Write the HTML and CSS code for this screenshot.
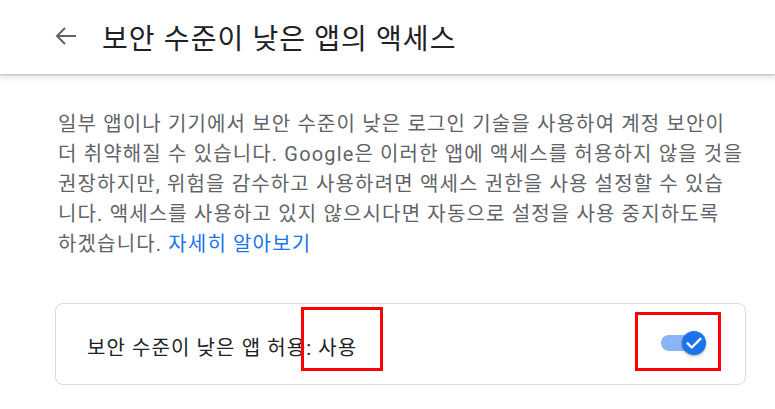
FILE: index.html
```html
<!DOCTYPE html>
<html lang="ko">
<head>
<meta charset="utf-8">
<link rel="stylesheet" href="styles.css">
</head>
<body>
<header class="topbar">
  <svg class="back" width="22" height="20" viewBox="0 0 22 20"><path d="M2 10H21M10 2L2 10L10 18" fill="none" stroke="#5f6368" stroke-width="2"/></svg>
  <h1 class="title">보안 수준이 낮은 앱의 액세스</h1>
</header>
<main class="content">
  <p class="desc">일부 앱이나 기기에서 보안 수준이 낮은 로그인 기술을 사용하여 계정 보안이 더 취약해질 수 있습니다. Google은 이러한 앱에 액세스를 허용하지 않을 것을 권장하지만, 위험을 감수하고 사용하려면 액세스 권한을 사용 설정할 수 있습니다. 액세스를 사용하고 있지 않으시다면 자동으로 설정을 사용 중지하도록 하겠습니다. <a class="link" href="#">자세히 알아보기</a></p>
  <div class="card">
    <span class="card-label">보안 수준이 낮은 앱 허용: 사용</span>
    <div class="switch">
      <span class="track"></span>
      <span class="knob"><svg width="18" height="18" viewBox="0 0 24 24"><path d="M3.5 12.5l5.5 5.5L20.5 6.5" fill="none" stroke="#fff" stroke-width="3.2" stroke-linecap="round" stroke-linejoin="round"/></svg></span>
    </div>
  </div>
</main>
<div class="mark mark-a"></div>
<div class="mark mark-b"></div>
</body>
</html>
```

FILE: styles.css
```css
* { box-sizing: border-box; }
html, body { margin: 0; padding: 0; background: #fff; }
body {
  font-family: Roboto, "Noto Sans CJK KR", sans-serif;
  position: relative;
  width: 775px;
  height: 409px;
  overflow: hidden;
}
.topbar {
  height: 74px;
  display: flex;
  align-items: center;
  padding-left: 55px;
  background: #fff;
  box-shadow: 0 1px 2px rgba(60,64,67,0.3), 0 2px 6px 2px rgba(60,64,67,0.12);
  position: relative;
}
.back { flex: none; margin-top: -2px; }
.title {
  margin: 0 0 0 25px;
  font-weight: 400;
  font-size: 28px;
  color: #202124;
  letter-spacing: 1.1px;
}
.content {
  padding: 35px 20px 0 58px;
}
.desc {
  margin: 0 12px 0 0;
  font-size: 20px;
  line-height: 30px;
  color: #5f6368;
  letter-spacing: 1.15px;
}
.link { color: #1a73e8; text-decoration: none; }
.card {
  margin: 44px 9px 0 -3px;
  height: 82px;
  border: 1px solid #dadce0;
  border-radius: 8px;
  display: flex;
  align-items: center;
  justify-content: space-between;
  padding: 0 39px 2px 31px;
}
.card-label {
  font-size: 20px;
  color: #202124;
  letter-spacing: 1.1px;
  padding-top: 6px;
}
.switch {
  position: relative;
  width: 45px;
  height: 24px;
  display: flex;
  align-items: center;
}
.track {
  width: 34px;
  height: 16px;
  border-radius: 8px;
  background: #8ab4f8;
}
.knob {
  position: absolute;
  right: 0;
  top: 0;
  width: 24px;
  height: 24px;
  border-radius: 50%;
  background: #1a73e8;
  box-shadow: 0 1px 3px rgba(0,0,0,0.35);
  display: flex;
  align-items: center;
  justify-content: center;
}
.mark {
  position: absolute;
  border: 3px solid #ff0000;
}
.mark-a { left: 301px; top: 307px; width: 82px; height: 64px; }
.mark-b { left: 635px; top: 312px; width: 86px; height: 59px; }
```
